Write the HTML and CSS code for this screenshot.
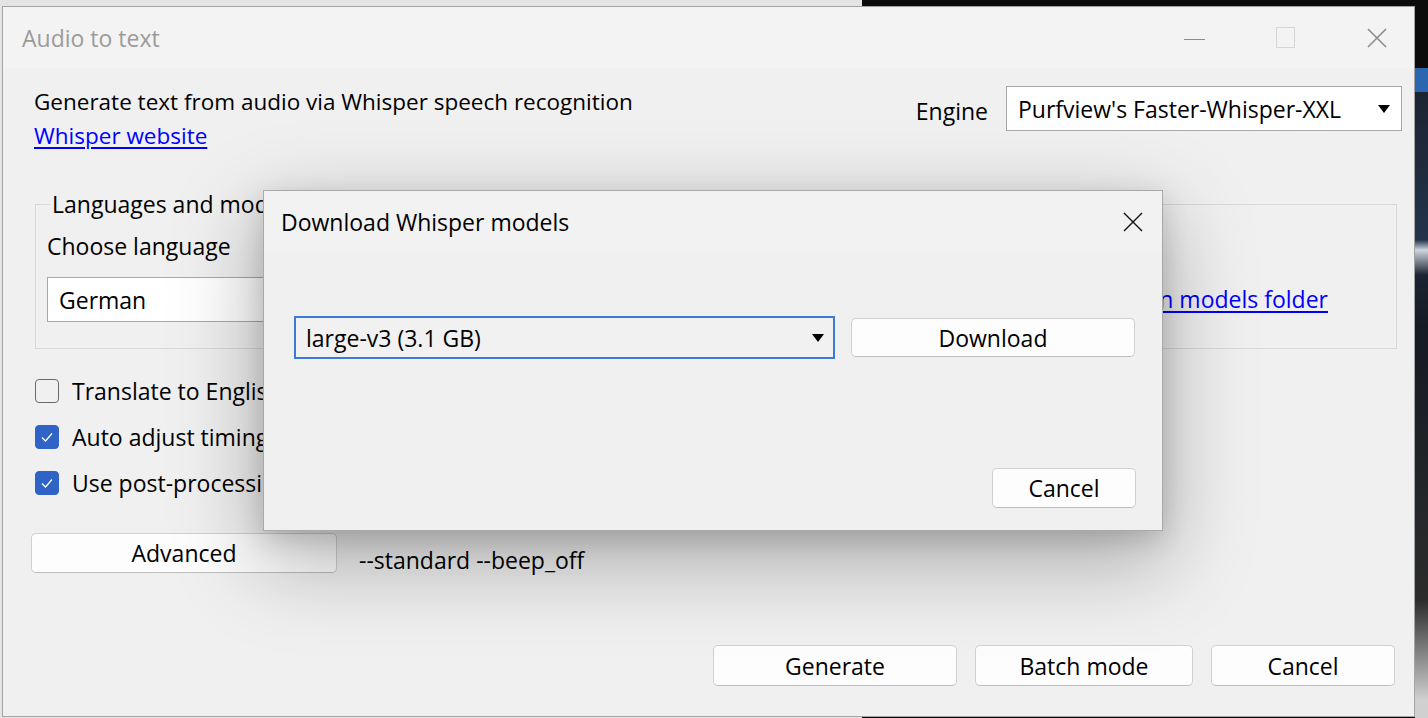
FILE: index.html
```html
<!DOCTYPE html>
<html>
<head>
<meta charset="utf-8">
<title>Audio to text</title>
<link rel="stylesheet" href="styles.css">
</head>
<body>
<div class="desktop">
  <div class="wall-right"></div>
  <div class="window main">
    <div class="titlebar">
      <span class="title">Audio to text</span>
      <div class="controls">
        <span class="ctl-min"></span>
        <span class="ctl-max"></span>
        <svg class="ctl-close" width="20" height="20" viewBox="0 0 20 20"><path d="M1 1 L19 19 M19 1 L1 19" stroke="#8c8c8c" stroke-width="1.6" fill="none"/></svg>
      </div>
    </div>
    <div class="client">
      <div class="header">
        <div class="intro">
          <div>Generate text from audio via Whisper speech recognition</div>
          <a class="link">Whisper website</a>
        </div>
        <div class="engine">
          <span>Engine</span>
          <div class="combo engine-combo">
            <span>Purfview's Faster-Whisper-XXL</span>
            <svg class="arrow" width="12" height="8" viewBox="0 0 12 8"><path d="M0 0 H12 L6 8 Z" fill="#000"/></svg>
          </div>
        </div>
      </div>
      <fieldset class="group">
        <legend>Languages and models</legend>
        <div class="group-row">
          <div class="lang-col">
            <div class="label">Choose language</div>
            <div class="combo lang-combo"><span>German</span></div>
          </div>
          <a class="link models-link">Open models folder</a>
        </div>
      </fieldset>
      <div class="checks">
        <div class="check-row"><span class="box"></span><span>Translate to English</span></div>
        <div class="check-row"><span class="box checked"><svg width="24" height="24" viewBox="0 0 24 24"><path d="M7 12.5 L10.5 16 L17 8.5" stroke="#fff" stroke-width="1.3" fill="none"/></svg></span><span>Auto adjust timings</span></div>
        <div class="check-row"><span class="box checked"><svg width="24" height="24" viewBox="0 0 24 24"><path d="M7 12.5 L10.5 16 L17 8.5" stroke="#fff" stroke-width="1.3" fill="none"/></svg></span><span>Use post-processing</span></div>
      </div>
      <div class="adv-row">
        <button class="btn adv">Advanced</button>
        <span class="params">--standard --beep_off</span>
      </div>
      <div class="actions">
        <button class="btn gen">Generate</button>
        <button class="btn batch">Batch mode</button>
        <button class="btn cancel-main">Cancel</button>
      </div>
    </div>
  </div>

  <div class="window dialog">
    <div class="dlg-titlebar">
      <span class="dlg-title">Download Whisper models</span>
      <svg class="dlg-close" width="20" height="20" viewBox="0 0 20 20"><path d="M1 1 L19 19 M19 1 L1 19" stroke="#111" stroke-width="1.4" fill="none"/></svg>
    </div>
    <div class="dlg-body">
      <div class="dlg-row">
        <div class="combo model-combo">
          <span>large-v3 (3.1 GB)</span>
          <svg class="arrow" width="12" height="8" viewBox="0 0 12 8"><path d="M0 0 H12 L6 8 Z" fill="#000"/></svg>
        </div>
        <button class="btn download">Download</button>
      </div>
      <button class="btn dlg-cancel">Cancel</button>
    </div>
  </div>
</div>
</body>
</html>
```

FILE: styles.css
```css
* { box-sizing: border-box; }

body {
  margin: 0;
  font-family: "Open Sans", "Noto Sans", sans-serif;
  font-size: 23px;
  color: #000;
}

.desktop {
  position: relative;
  width: 1428px;
  height: 718px;
  overflow: hidden;
  background: linear-gradient(to right, #e4e4e4 0, #e4e4e4 862px, #0b0b0b 862px);
}

.wall-right {
  position: absolute;
  left: 1415px;
  top: 0;
  width: 13px;
  height: 718px;
  background: linear-gradient(to bottom, #0b0b0b 0, #0b0b0b 68px, #2a67b0 68px, #2a67b0 92px, #1b2432 92px, #24344a 240px, #cfd6de 250px, #1b2432 275px, #151b23 330px, #2c2c2c 600px, #d0d0d0 700px);
}

.window {
  position: absolute;
  background: #f0f0f0;
}

.main {
  left: 2px;
  top: 6px;
  width: 1413px;
  height: 711px;
  border: 1px solid #a4a4a4;
  display: flex;
  flex-direction: column;
}

.titlebar {
  height: 61px;
  flex: none;
  background: #f3f3f3;
  display: flex;
  align-items: center;
  padding-left: 19px;
}

.title {
  color: #9b9b9b;
}

.controls {
  margin-left: auto;
  display: flex;
  align-items: center;
  padding-right: 27px;
}

.ctl-min {
  width: 21px;
  height: 1px;
  background: #8c8c8c;
  margin-top: 4px;
}

.ctl-max {
  width: 19px;
  height: 21px;
  border: 1px solid #d6d6d6;
  margin-left: 71px;
}

.ctl-close {
  margin-left: 72px;
}

.client {
  flex: 1;
  display: flex;
  flex-direction: column;
}

.header {
  display: flex;
  justify-content: space-between;
  padding: 0 12px 0 31px;
}

.intro {
  margin-top: 17px;
  line-height: 34px;
  font-size: 22.5px;
}

.link {
  color: #0000ff;
  text-decoration: underline;
  text-underline-offset: 3px;
}

.engine {
  margin-top: 18px;
  display: flex;
  align-items: center;
  gap: 18px;
  height: 45px;
}

.engine > span {
  margin-top: 4px;
}

.combo {
  display: flex;
  align-items: center;
  background: #fff;
  border: 1px solid #a8a8a8;
  padding: 0 11px 0 11px;
}

.combo .arrow {
  margin-left: auto;
}

.engine-combo {
  width: 396px;
  height: 45px;
}

.group {
  margin: 36px 17px 0 32px;
  border: 1px solid #d8d8d8;
  padding: 12px 68px 26px 11px;
  min-width: 0;
}

.group legend {
  line-height: 30px;
  padding: 0 2px;
  margin-left: 3px;
}

.group-row {
  display: flex;
  align-items: flex-end;
  justify-content: space-between;
}

.label {
  line-height: 30px;
}

.lang-combo {
  margin-top: 16px;
  width: 380px;
  height: 45px;
}

.models-link {
  line-height: 45px;
}

.checks {
  margin: 19px 0 0 32px;
}

.check-row {
  height: 46px;
  display: flex;
  align-items: center;
  gap: 13px;
}

.box {
  width: 24px;
  height: 24px;
  border: 1.5px solid #6a6a6a;
  border-radius: 4px;
  background: transparent;
  display: block;
}

.box.checked {
  background: #2f63c6;
  border-color: #2f63c6;
}

.box.checked svg {
  display: block;
  margin: -1.5px;
}

.adv-row {
  margin: 27px 0 0 28px;
  display: flex;
  align-items: flex-start;
}

.btn {
  font-family: inherit;
  font-size: 23px;
  color: #000;
  background: #fdfdfd;
  border: 1px solid #d0d0d0;
  border-bottom-color: #bdbdbd;
  border-radius: 5px;
  padding: 0;
}

.adv {
  width: 306px;
  height: 40px;
}

.params {
  margin: 12px 0 0 22px;
  line-height: 30px;
}

.actions {
  margin-top: auto;
  padding: 0 19px 30px 0;
  display: flex;
  justify-content: flex-end;
  gap: 18px;
}

.gen { width: 244px; height: 41px; }
.batch { width: 218px; height: 41px; }
.cancel-main { width: 184px; height: 41px; }

.dialog {
  left: 263px;
  top: 190px;
  width: 900px;
  height: 341px;
  border: 1px solid #a9a9a9;
  display: flex;
  flex-direction: column;
  box-shadow: 0 28px 80px 6px rgba(0, 0, 0, 0.28), 0 8px 24px rgba(0, 0, 0, 0.14);
}

.dlg-titlebar {
  height: 61px;
  flex: none;
  background: #f2f2f2;
  display: flex;
  align-items: center;
  padding: 0 19px 0 17px;
}

.dlg-close {
  margin-left: auto;
}

.dlg-body {
  flex: 1;
  display: flex;
  flex-direction: column;
  padding: 0 26px 22px 30px;
}

.dlg-row {
  margin-top: 64px;
  display: flex;
  align-items: center;
  gap: 16px;
}

.model-combo {
  width: 541px;
  height: 43px;
  background: #f1f1f1;
  border: 2px solid #3b7bd3;
  padding: 0 9px 0 10px;
}

.download {
  width: 284px;
  height: 39px;
}

.dlg-cancel {
  margin-top: auto;
  align-self: flex-end;
  width: 144px;
  height: 40px;
}
```
